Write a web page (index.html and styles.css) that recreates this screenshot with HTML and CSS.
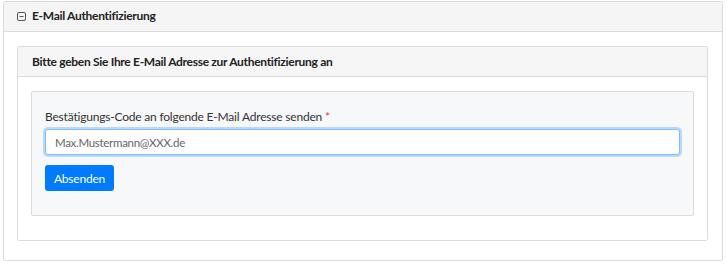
FILE: index.html
```html
<!DOCTYPE html>
<html lang="de">
<head>
<meta charset="utf-8">
<link rel="stylesheet" href="styles.css">
</head>
<body>
<div class="panel outer">
  <div class="panel-heading outer-heading">
    <svg class="toggle" width="9" height="9" viewBox="0 0 9 9"><rect x="0.5" y="0.5" width="8" height="8" rx="1.5" fill="none" stroke="#555" stroke-width="1"/><line x1="2.5" y1="4.5" x2="6.5" y2="4.5" stroke="#555" stroke-width="1"/></svg>
    <span class="title">E-Mail Authentifizierung</span>
  </div>
  <div class="panel-body outer-body">
    <div class="panel inner">
      <div class="panel-heading inner-heading">Bitte geben Sie Ihre E-Mail Adresse zur Authentifizierung an</div>
      <div class="panel-body inner-body">
        <div class="well">
          <label class="label" for="mail">Bestätigungs-Code an folgende E-Mail Adresse senden <span class="req">*</span></label>
          <input id="mail" class="input" type="text" value="Max.Mustermann@XXX.de">
          <button class="btn" type="button">Absenden</button>
        </div>
      </div>
    </div>
  </div>
</div>
</body>
</html>
```
FILE: styles.css
```css
html, body {
  margin: 0;
  padding: 0;
  background: #ffffff;
}
body {
  padding: 1px 4px 3px 3px;
  font-family: "Lato", "Liberation Sans", sans-serif;
  color: #222;
  font-size: 12px;
}
.panel {
  border: 1px solid #dcdcdc;
  border-radius: 2px;
  background: #fff;
}
.outer-heading {
  height: 29px;
  background: #f5f5f5;
  border-bottom: 1px solid #dcdcdc;
  display: flex;
  align-items: center;
  padding-left: 13px;
  gap: 6px;
}
.toggle { display: block; }
.title {
  font-weight: bold;
  font-size: 12px;
  letter-spacing: -0.3px;
  color: #222;
  line-height: 14px;
  margin-top: -1px;
}
.outer-body {
  padding: 14px 14px 19px 13px;
}
.inner-heading {
  height: 29px;
  background: #f6f6f6;
  border-bottom: 1px solid #dcdcdc;
  display: flex;
  align-items: center;
  padding-left: 14px;
  font-weight: bold;
  font-size: 12px;
  letter-spacing: -0.3px;
  color: #222;
}
.inner-body {
  padding: 14px 13px 24px 13px;
}
.well {
  background: #f7f8fa;
  border: 1px solid #dcdcdc;
  border-radius: 2px;
  padding: 17px 13px 24px 13px;
  display: flex;
  flex-direction: column;
  align-items: flex-start;
}
.label {
  font-size: 12px;
  letter-spacing: -0.2px;
  color: #333;
  line-height: 15px;
  margin-bottom: 5px;
}
.req { color: #e04040; }
.input {
  box-sizing: border-box;
  width: 100%;
  height: 26px;
  border: 1px solid #80bdff;
  border-radius: 3px;
  box-shadow: 0 0 0 2px rgba(0, 123, 255, 0.25);
  padding: 0 9px;
  font-family: inherit;
  font-size: 11.5px;
  letter-spacing: -0.3px;
  color: #666;
  background: #fff;
  outline: none;
  margin-bottom: 10px;
}
.btn {
  box-sizing: border-box;
  height: 26px;
  width: 69px;
  padding: 0;
  border: none;
  border-radius: 3px;
  background: #007bff;
  color: #fff;
  font-family: inherit;
  font-size: 12px;
  letter-spacing: -0.2px;
}
```
